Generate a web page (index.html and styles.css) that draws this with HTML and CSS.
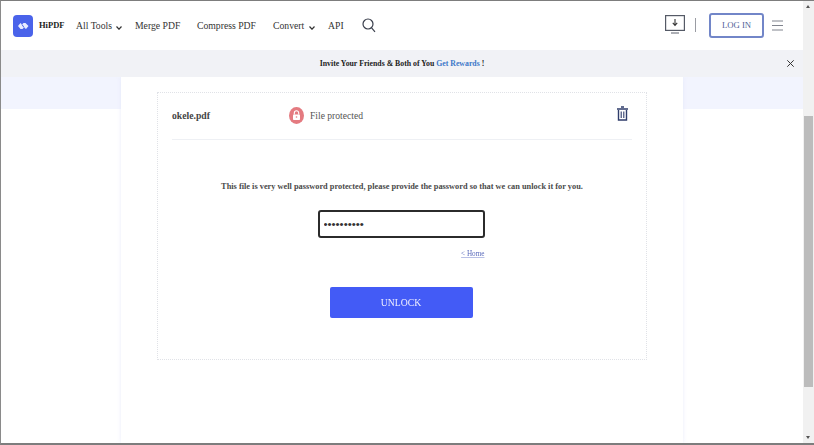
FILE: index.html
```html
<!DOCTYPE html>
<html lang="en">
<head>
<meta charset="utf-8">
<title>HiPDF</title>
<link rel="stylesheet" href="styles.css">
</head>
<body>
<div class="window">
  <div class="page">
    <header class="topbar">
      <a class="brand">
        <span class="logo">
          <svg width="20" height="22" viewBox="0 0 20 22"><rect width="20" height="22" rx="4" fill="#4a63ea"/><path d="M5 11 7.500 8 9 9.500 10.500 8 12.500 8 15.500 11 13 14 11 12.500 9.500 14 7.500 14Z" fill="#e9ecff"/><path d="M9 9.500 11 12.500" stroke="#4a63ea" stroke-width="1"/></svg>
        </span>
        <span class="brand-name">HiPDF</span>
      </a>
      <nav class="nav">
        <a class="nav-item nav-tools">All Tools <svg class="chev" width="6" height="4" viewBox="0 0 6 4"><path d="M.5.500 3 3.200 5.500.500" fill="none" stroke="#333" stroke-width="1.200"/></svg></a>
        <a class="nav-item nav-merge">Merge PDF</a>
        <a class="nav-item nav-compress">Compress PDF</a>
        <a class="nav-item nav-convert">Convert <svg class="chev" width="6" height="4" viewBox="0 0 6 4"><path d="M.5.500 3 3.200 5.500.500" fill="none" stroke="#333" stroke-width="1.200"/></svg></a>
        <a class="nav-item nav-api">API</a>
        <svg class="search" width="14" height="15" viewBox="0 0 14 15"><circle cx="6" cy="6" r="5" fill="none" stroke="#3a3f4c" stroke-width="1.200"/><path d="M9.600 9.800 13 13.800" stroke="#3a3f4c" stroke-width="1.200"/></svg>
      </nav>
      <div class="actions">
        <svg class="monitor" width="20" height="20" viewBox="0 0 20 20"><rect x=".6" y=".6" width="18.800" height="14.800" fill="none" stroke="#555a66" stroke-width="1.200"/><path d="M10 4V10M7.800 7.800 10 10.500 12.200 7.800" fill="none" stroke="#333" stroke-width="1.100"/><path d="M6 18H14" stroke="#8a8d96" stroke-width="1.400"/></svg>
        <span class="sep"></span>
        <a class="login">LOG IN</a>
        <svg class="burger" width="11" height="11" viewBox="0 0 11 11"><path d="M0 1H11M0 5.500H11M0 10H11" stroke="#80848e" stroke-width="1"/></svg>
      </div>
    </header>
    <div class="notice">
      <span class="notice-text">Invite Your Friends &amp; Both of You <a class="notice-link">Get Rewards</a> !</span>
      <svg class="notice-close" width="7" height="7" viewBox="0 0 7 7"><path d="M.3.300 6.700 6.700M6.700.300.3 6.700" stroke="#333" stroke-width="1"/></svg>
    </div>
    <main class="content">
      <section class="card">
        <div class="dropbox">
          <div class="file-row">
            <span class="file-name">okele.pdf</span>
            <span class="lock">
              <svg width="15" height="17" viewBox="0 0 15 17"><ellipse cx="7.500" cy="8.500" rx="7.500" ry="8.500" fill="#e47a80"/><rect x="4" y="7.500" width="7" height="5.500" rx=".8" fill="#fff"/><path d="M5.300 7.500V6a2.200 2.200 0 0 1 4.400 0V7.500" fill="none" stroke="#fff" stroke-width="1.100"/><circle cx="7.500" cy="10" r=".8" fill="#e47a80"/></svg>
            </span>
            <span class="file-status">File protected</span>
            <svg class="trash" width="11" height="15" viewBox="0 0 11 15"><path d="M4 1H7M0 3H11" stroke="#2f3d6b" stroke-width="1.500"/><path d="M1.500 4V14H9.500V4" fill="none" stroke="#2f3d6b" stroke-width="1.400"/><path d="M4.200 5.500V12M6.800 5.500V12" stroke="#2f3d6b" stroke-width="1.100"/></svg>
          </div>
          <p class="prompt">This file is very well password protected, please provide the password so that we can unlock it for you.</p>
          <input class="password" type="password" value="**********" aria-label="Password">
          <div class="home-row"><a class="home">&lt; Home</a></div>
          <button class="unlock" type="button">UNLOCK</button>
        </div>
      </section>
    </main>
  </div>
  <div class="scrollbar">
    <span class="arrow arrow-up"></span>
    <span class="track"><span class="thumb"></span></span>
    <span class="arrow arrow-down"></span>
  </div>
</div>
</body>
</html>
```
FILE: styles.css
```css
* { box-sizing: border-box; }
html, body { margin: 0; height: 100%; overflow: hidden; background: #fff; }
body { font-family: "Liberation Serif", serif; color: #333; }
a { color: inherit; text-decoration: none; }

.window {
  width: 814px; height: 445px; display: flex;
  border-top: 1px solid #7d7d7d; border-bottom: 2px solid #7d7d7d; border-left: 1px solid #8a8a8a;
  overflow: hidden; filter: blur(.3px);
}
.page { width: 802px; flex: none; display: flex; flex-direction: column; }

.topbar { height: 49px; flex: none; display: flex; align-items: center; background: #fff; padding: 0 0 0 12px; }
.brand { display: flex; align-items: center; width: 63px; flex: none; }
.logo { display: flex; width: 26px; flex: none; }
.brand-name { font-size: 8.500px; font-weight: 700; color: #222; margin-top: -2px; }
.nav { display: flex; align-items: center; flex: none; font-size: 9.700px; color: #333; }
.nav-item { white-space: nowrap; }
.chev { margin-left: 2px; vertical-align: -1px; }
.nav-tools { width: 59px; }
.nav-merge { width: 62px; }
.nav-compress { width: 76px; }
.nav-convert { width: 55px; }
.nav-api { width: 34px; }
.search { flex: none; margin-top: -1px; }
.actions { margin-left: auto; display: flex; align-items: center; flex: none; margin-top: -1px; }
.monitor { display: block; }
.sep { width: 1px; height: 14px; background: #9a9ca3; margin: 0 13px 0 10px; }
.login {
  width: 55px; height: 25px; display: flex; align-items: center; justify-content: center;
  border: 2px solid #7286c8; border-radius: 3px; font-size: 8.700px; color: #4f5f98;
}
.burger { margin: 0 20px 0 8px; display: block; }

.notice { height: 27px; flex: none; background: #f1f2f6; display: flex; align-items: center; position: relative; justify-content: center; }
.notice-text { font-size: 7.800px; font-weight: 700; color: #222; }
.notice-link { color: #3d78c9; }
.notice-close { position: absolute; right: 9px; top: 10px; }

.content { flex: 1; min-height: 0; background: linear-gradient(#f2f4fe 32px, #fff 32px); padding: 0 120px; }
.card { height: 100%; background: #fff; box-shadow: 0 0 4px rgba(225, 228, 250, .7); padding: 15px 36px 0; }
.dropbox { height: 268px; border: 1px dotted #e0e2e7; padding: 0 14px; display: flex; flex-direction: column; align-items: center; }

.file-row { width: 100%; height: 47px; flex: none; display: flex; align-items: center; border-bottom: 1px solid #eef0f4; padding-bottom: 2px; }
.file-name { width: 117px; font-size: 9.700px; font-weight: 700; color: #444; flex: none; }
.lock { display: flex; width: 21px; flex: none; }
.file-status { font-size: 9.600px; color: #555; }
.trash { margin-left: auto; margin-right: 4px; margin-top: -4px; }

.prompt { margin: 41px 0 0; font-size: 8.330px; font-weight: 700; color: #4a4a4a; white-space: nowrap; line-height: 12px; }
.password {
  width: 167px; height: 28px; margin: 17px 2px 0 0; padding: 0 4px; flex: none;
  border: 2px solid #2b2b2b; border-radius: 3px; background: #fff; font-size: 11.500px; color: #333;
  font-family: "Liberation Sans", sans-serif; outline: none;
}
.home-row { width: 167px; display: flex; justify-content: flex-end; margin: 11px 2px 0 0; height: 10px; }
.home { font-size: 7.200px; line-height: 10px; color: #5b6bbb; text-decoration: underline; text-decoration-color: #b9c0e6; }
.unlock {
  width: 143px; height: 31px; margin: 28px 2px 0 0; flex: none; border: 0; border-radius: 2px;
  background: #435bf6; color: #eef; font-family: "Liberation Serif", serif; font-size: 9.700px;
}

.scrollbar { flex: 1; display: flex; flex-direction: column; background: #f1f1f1; align-items: stretch; }
.arrow { height: 11px; flex: none; position: relative; }
.arrow::after { content: ""; position: absolute; left: 3px; top: 4px; border-left: 2px solid transparent; border-right: 2px solid transparent; }
.arrow-up::after { border-bottom: 3px solid #555; }
.arrow-down::after { border-top: 3px solid #555; }
.track { flex: 1; display: flex; flex-direction: column; padding-top: 104px; padding-left: 1px; padding-right: 1px; }
.thumb { height: 271px; background: #bcbcbc; }
```
